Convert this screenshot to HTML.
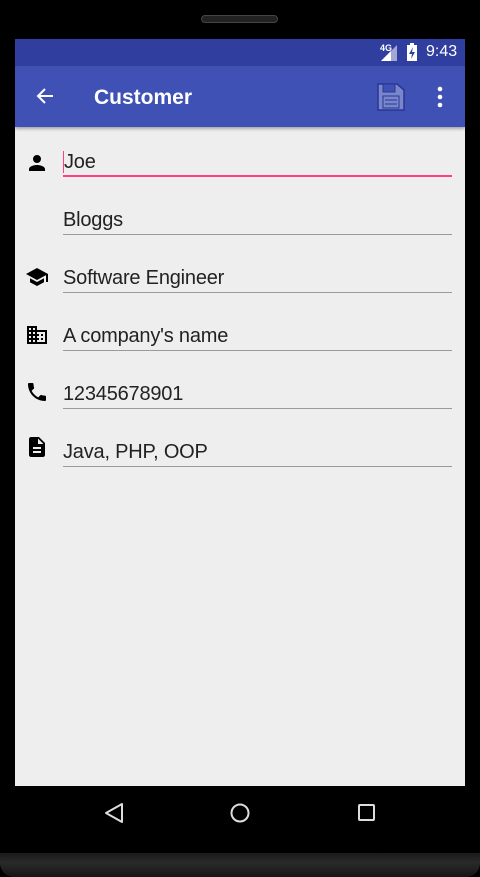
<!DOCTYPE html>
<html><head><style>
body{margin:0;width:480px;height:877px;background:#000;position:relative;overflow:hidden;font-family:"Liberation Sans",Roboto,sans-serif}
.phone{position:absolute;left:0;top:0;width:480px;height:877px;background:#000;border-radius:26px 26px 14px 14px}
.bezel{position:absolute;left:0;top:853px;width:480px;height:24px;background:linear-gradient(#1a1a1a,#2a2a2a 40%,#151515);border-radius:0 0 14px 14px}
.spk{position:absolute;left:201px;top:15px;width:77px;height:8px;border-radius:4px;background:#222;border:1px solid #444;box-sizing:border-box}
.status{position:absolute;left:15px;top:39px;width:450px;height:27px;background:#303f9f;color:#fff}
.bar{position:absolute;left:15px;top:66px;width:450px;height:61px;background:#3f51b5;box-shadow:0 2px 3px rgba(0,0,0,.3);z-index:2}
.content{position:absolute;left:15px;top:127px;width:450px;height:659px;background:#eeeeee}
.f{position:absolute;left:48px;width:389px;height:30px;font-size:20px;color:#222;border-bottom:1.5px solid #9a9a9a;box-sizing:border-box;line-height:30px;letter-spacing:-0.2px}
.ic{position:absolute;left:10px}
</style></head><body>
<div class="phone"></div>
<div class="spk"></div>
<div class="status">
<span style="position:absolute;left:365px;top:4px;font-size:9px;font-weight:bold">4G</span>
<svg style="position:absolute;left:366px;top:4px" width="18" height="18"><path d="M16 2V18H0Z" fill="#fff" opacity=".55"/><path d="M10 8V18H0Z" fill="#fff"/></svg>
<svg style="position:absolute;left:392px;top:4px" width="10" height="18"><rect x="0" y="2" width="10" height="16" fill="#fff"/><rect x="3" y="0" width="4" height="2" fill="#fff"/><path d="M6 4L2 11H5L4 16L8 9H5Z" fill="#303f9f"/></svg>
<span style="position:absolute;left:411px;top:4px;font-size:16px">9:43</span>
</div>
<div class="bar">
<svg style="position:absolute;left:20px;top:20px" width="20" height="20"><path d="M18 10H3M10 3L3 10L10 17" stroke="#fff" stroke-width="2" fill="none"/></svg>
<span style="position:absolute;left:79px;top:20px;font-size:21px;color:#fff;font-weight:bold">Customer</span>
<svg style="position:absolute;left:362px;top:17px" width="28" height="28"><path d="M1 1H20L27 7V27H1Z" fill="#7986cb" stroke="#283593" stroke-width="1.5"/><rect x="6" y="1" width="12" height="8" fill="#3f51b5" stroke="#283593"/><rect x="6" y="13" width="16" height="12" fill="#7986cb" stroke="#283593"/><path d="M8 17H20M8 21H20" stroke="#283593"/></svg>
<svg style="position:absolute;left:421px;top:20px" width="8" height="22"><circle cx="4" cy="3" r="2.3" fill="#fff"/><circle cx="4" cy="11" r="2.3" fill="#fff"/><circle cx="4" cy="19" r="2.3" fill="#fff"/></svg>
</div>
<div class="content">
<svg class="ic" style="top:24px" width="24" height="24" viewBox="0 0 24 24"><path d="M12 12a4 4 0 1 0 0-8a4 4 0 0 0 0 8zm0 2c-2.7 0-8 1.3-8 4v2h16v-2c0-2.7-5.3-4-8-4z"/></svg>
<div class="f" style="top:20px;border-bottom:2px solid #ff4081"><span style="border-left:1.5px solid #ff4081">Joe</span></div>
<div class="f" style="top:78px">Bloggs</div>
<svg class="ic" style="top:138px" width="24" height="24" viewBox="0 0 24 24"><path d="M5 13.2v4L12 21l7-3.8v-4L12 17zM12 3L1 9l11 6 9-4.9V17h2V9z"/></svg>
<div class="f" style="top:136px">Software Engineer</div>
<svg class="ic" style="top:196px" width="24" height="24" viewBox="0 0 24 24"><path d="M12 7V3H2v18h20V7H12zM6 19H4v-2h2v2zm0-4H4v-2h2v2zm0-4H4V9h2v2zm0-4H4V5h2v2zm4 12H8v-2h2v2zm0-4H8v-2h2v2zm0-4H8V9h2v2zm0-4H8V5h2v2zm10 12h-8v-2h2v-2h-2v-2h2v-2h-2V9h8v10zm-2-8h-2v2h2v-2zm0 4h-2v2h2v-2z"/></svg>
<div class="f" style="top:194px">A company's name</div>
<svg class="ic" style="top:253px" width="24" height="24" viewBox="0 0 24 24"><path d="M6.6 10.8c1.4 2.8 3.8 5.1 6.6 6.6l2.2-2.2c.3-.3.7-.4 1-.2 1.1.4 2.3.6 3.6.6.6 0 1 .4 1 1V20c0 .6-.4 1-1 1C10.6 21 3 13.4 3 4c0-.6.4-1 1-1h3.5c.6 0 1 .4 1 1 0 1.3.2 2.5.6 3.6.1.3 0 .7-.2 1z"/></svg>
<div class="f" style="top:252px">12345678901</div>
<svg class="ic" style="top:308px" width="24" height="24" viewBox="0 0 24 24"><path d="M14 2H6c-1.1 0-2 .9-2 2v16c0 1.1.9 2 2 2h12c1.1 0 2-.9 2-2V8l-6-6zm2 16H8v-2h8v2zm0-4H8v-2h8v2zm-3-5V3.5L18.5 9H13z"/></svg>
<div class="f" style="top:310px">Java, PHP, OOP</div>
</div>
<svg style="position:absolute;left:104px;top:802px" width="20" height="22"><path d="M18 2V20L2 11Z" fill="none" stroke="#ddd" stroke-width="2" stroke-linejoin="round"/></svg>
<svg style="position:absolute;left:229px;top:802px" width="22" height="22"><circle cx="11" cy="11" r="8.5" fill="none" stroke="#ddd" stroke-width="2"/></svg>
<svg style="position:absolute;left:357px;top:803px" width="20" height="20"><rect x="2" y="2" width="15" height="15" rx="1" fill="none" stroke="#ddd" stroke-width="2"/></svg>
<div class="bezel"></div>
</body></html>
